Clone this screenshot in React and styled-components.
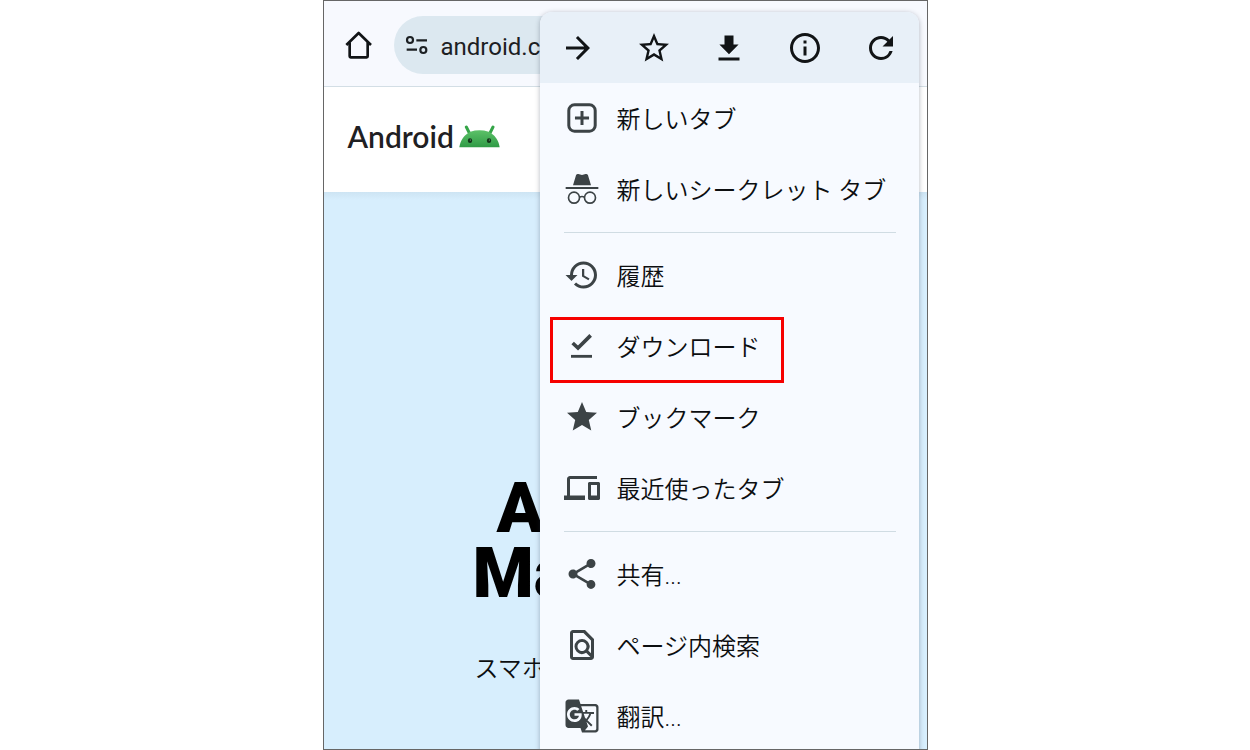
import styled, { createGlobalStyle } from "styled-components";
import {
  MdArrowForward,
  MdGTranslate,
  MdHistory,
  MdOutlineDevices,
  MdOutlineFindInPage,
  MdOutlineInfo,
  MdRefresh,
  MdShare,
  MdStar,
  MdStarBorder,
} from "react-icons/md";

const HomeIcon = () => (
  <svg viewBox="0 0 108 108" fill="none" stroke="#111416" strokeWidth="8">
    <path d="M16 54 53 18l37 36" strokeLinejoin="round" />
    <path d="M26 46v42q0 3 3 3h48q3 0 3-3V46" />
  </svg>
);

const TuneIcon = () => (
  <svg viewBox="0 0 72 72" fill="none" stroke="#1c2023" strokeWidth="6.5">
    <circle cx="15" cy="21" r="9" />
    <path d="M34 22h32M5 50h31" />
    <circle cx="55" cy="51" r="9" />
  </svg>
);

const DownloadIcon = () => (
  <svg viewBox="0 0 24 24" fill="currentColor">
    <path d="M5 18.4h14v1.9H5zM18.4 9.6H15V3.6H9v6H5.6l6.4 6.6z" />
  </svg>
);

const NewTabIcon = () => (
  <svg viewBox="0 0 24 24" fill="none" stroke="currentColor" strokeWidth="2">
    <rect x="3.2" y="3.2" width="17.6" height="17.6" rx="3.8" />
    <path d="M12 7.3v9.4M7.3 12h9.4" />
  </svg>
);

const IncognitoIcon = () => (
  <svg viewBox="0 0 108 108" fill="none" stroke="currentColor">
    <path
      d="M27 43 36 13q2-5 7-4l11 3 11-3q5-1 7 4l9 30z"
      fill="currentColor"
      stroke="none"
    />
    <path d="M5 51h98" strokeWidth="6.5" />
    <circle cx="30" cy="80" r="16.5" strokeWidth="5" />
    <circle cx="78" cy="80" r="16.5" strokeWidth="5" />
    <path d="M46 79q8-5 16 0" strokeWidth="5" />
  </svg>
);

const DownloadDoneIcon = () => (
  <svg viewBox="0 0 108 108" fill="none" stroke="currentColor">
    <path d="m26 45 16 15 38-38" strokeWidth="11" />
    <path d="M21 85h63" strokeWidth="8.5" />
  </svg>
);

const AndroidHead = () => (
  <svg width="41" height="23" viewBox="0 0 123 69">
    <defs>
      <linearGradient id="head" x1="0" y1="0" x2="0" y2="1">
        <stop offset="0" stopColor="#5cc168" />
        <stop offset="1" stopColor="#2f9a45" />
      </linearGradient>
    </defs>
    <path
      d="m22 6 9 18M102 6 93 24"
      stroke="#35a548"
      strokeWidth="9"
      strokeLinecap="round"
    />
    <path
      d="M1 67C4 45 16 29 34 20q27-8 55 0c18 9 30 25 33 47z"
      fill="url(#head)"
    />
    <ellipse cx="33" cy="47" rx="6.5" ry="7" fill="#123319" />
    <ellipse cx="90" cy="47" rx="6.5" ry="7" fill="#123319" />
    <circle cx="34" cy="45" r="1.5" fill="#9cc5a2" />
    <circle cx="91" cy="45" r="1.5" fill="#9cc5a2" />
  </svg>
);

const actions = [
  { label: "進む", icon: <MdArrowForward /> },
  { label: "ブックマークに追加", icon: <MdStarBorder /> },
  { label: "ページをダウンロード", icon: <DownloadIcon /> },
  { label: "ページ情報", icon: <MdOutlineInfo /> },
  { label: "再読み込み", icon: <MdRefresh /> },
];

const groups = [
  [
    { label: "新しいタブ", icon: <NewTabIcon /> },
    { label: "新しいシークレット タブ", icon: <IncognitoIcon /> },
  ],
  [
    { label: "履歴", icon: <MdHistory /> },
    { label: "ダウンロード", icon: <DownloadDoneIcon />, marked: true },
    { label: "ブックマーク", icon: <MdStar /> },
    { label: "最近使ったタブ", icon: <MdOutlineDevices /> },
  ],
  [
    { label: "共有...", icon: <MdShare /> },
    { label: "ページ内検索", icon: <MdOutlineFindInPage /> },
    { label: "翻訳...", icon: <MdGTranslate /> },
  ],
];

function OverflowMenu() {
  return (
    <Menu>
      <ActionBar>
        {actions.map(({ label, icon }) => (
          <ActionButton key={label} aria-label={label}>
            {icon}
          </ActionButton>
        ))}
      </ActionBar>
      {groups.map((items) => (
        <MenuGroup key={items[0].label}>
          {items.map(({ label, icon, marked }) => (
            <MenuItem key={label} $marked={marked}>
              {icon}
              <span>{label}</span>
            </MenuItem>
          ))}
        </MenuGroup>
      ))}
    </Menu>
  );
}

function App() {
  return (
    <>
      <GlobalStyle />
      <Screen>
        <Toolbar>
          <HomeButton aria-label="ホーム">
            <HomeIcon />
          </HomeButton>
          <AddressBar>
            <TuneIcon />
            <AddressInput
              aria-label="アドレス"
              defaultValue="android.com"
              readOnly
            />
          </AddressBar>
        </Toolbar>
        <SiteHeader>
          <Brand href="#">
            Android
            <AndroidHead />
          </Brand>
        </SiteHeader>
        <Hero>
          <Title>
            <TitleLine $indent="24px">A</TitleLine>
            <TitleLine>Ma</TitleLine>
          </Title>
          <Lead>スマホ</Lead>
        </Hero>
        <OverflowMenu />
      </Screen>
    </>
  );
}

export default App;

const GlobalStyle = createGlobalStyle`
  *,
  *::before,
  *::after {
    box-sizing: border-box;
  }

  body {
    margin: 0;
    background: #fff;
    font-family: Roboto, "Noto Sans CJK JP", sans-serif;
  }

  button {
    border: 0;
    padding: 0;
    background: none;
    font: inherit;
    cursor: pointer;
  }
`;

const Screen = styled.div`
  position: relative;
  display: flex;
  flex-direction: column;
  max-width: 605px;
  height: 100vh;
  margin: 0 auto;
  border: 1px solid #666;
  overflow: hidden;
`;

const Toolbar = styled.header`
  display: flex;
  align-items: center;
  gap: 17px;
  padding: 15px 17px 12px;
  border-bottom: 1px solid #d3dee5;
  background: #f7f9fe;
`;

const HomeButton = styled.button`
  width: 36px;
  height: 36px;
`;

const AddressBar = styled.div`
  display: flex;
  flex: 1;
  align-items: center;
  gap: 12px;
  height: 58px;
  padding: 0 11px;
  border-radius: 29px;
  background: #dce8f0;

  svg {
    width: 24px;
    height: 24px;
  }
`;

const AddressInput = styled.input`
  flex: 1;
  min-width: 0;
  border: 0;
  padding: 3px 0 0;
  background: none;
  color: #1c2023;
  font-family: Roboto, sans-serif;
  font-size: 24px;
`;

const SiteHeader = styled.div`
  display: flex;
  align-items: center;
  height: 105px;
  padding: 0 24px 7px;
  background: #fff;
`;

const Brand = styled.a`
  display: flex;
  align-items: center;
  gap: 5px;
  color: #1f2023;
  font-family: Lato, sans-serif;
  font-size: 30px;
  font-weight: 600;
  line-height: 36px;
  text-decoration: none;
`;

const Hero = styled.main`
  flex: 1;
  padding: 284px 0 0 149px;
  background: linear-gradient(#cde4f3, #d7eefd 8px);
`;

const Title = styled.h1`
  margin: 0;
  color: #000;
  font-family: Roboto, sans-serif;
  font-size: 70px;
  font-weight: 900;
  line-height: 65px;
`;

const TitleLine = styled.span`
  display: block;
  padding-left: ${({ $indent }) => $indent || 0};
`;

const Lead = styled.p`
  margin: 46px 0 0 2px;
  color: #0c0e10;
  font-size: 24px;
  font-weight: 350;
  line-height: 34px;
`;

const Menu = styled.nav`
  position: absolute;
  top: 11px;
  right: 8px;
  width: 379px;
  padding-bottom: 16px;
  border-radius: 12px;
  background: #f7faff;
  box-shadow: 0 1px 5px rgba(40, 50, 70, 0.35);
  overflow: hidden;
`;

const ActionBar = styled.div`
  display: flex;
  height: 71px;
  padding-left: 1px;
  background: #e8f0f8;
`;

const ActionButton = styled.button`
  display: flex;
  flex: 1;
  align-items: center;
  justify-content: center;
  color: #111416;

  svg {
    width: 36px;
    height: 36px;
  }
`;

const MenuGroup = styled.div`
  & + &::before {
    content: "";
    display: block;
    height: 1px;
    margin: 7px 23px 7px 24px;
    background: #d0dce3;
  }
`;

const MenuItem = styled.button`
  position: relative;
  display: flex;
  align-items: center;
  gap: 17px;
  width: 100%;
  height: 71px;
  padding: 0 23px 2px 24px;
  color: #3c4346;
  text-align: left;

  svg {
    width: 36px;
    height: 36px;
  }

  span {
    padding-top: 4px;
    color: #0c0e10;
    font-size: 24px;
    font-weight: 350;
    line-height: 34px;
  }

  &::after {
    content: "";
    display: ${({ $marked }) => ($marked ? "block" : "none")};
    position: absolute;
    top: 6px;
    left: 10px;
    width: 234px;
    height: 66px;
    border: 3px solid #f60000;
  }
`;
